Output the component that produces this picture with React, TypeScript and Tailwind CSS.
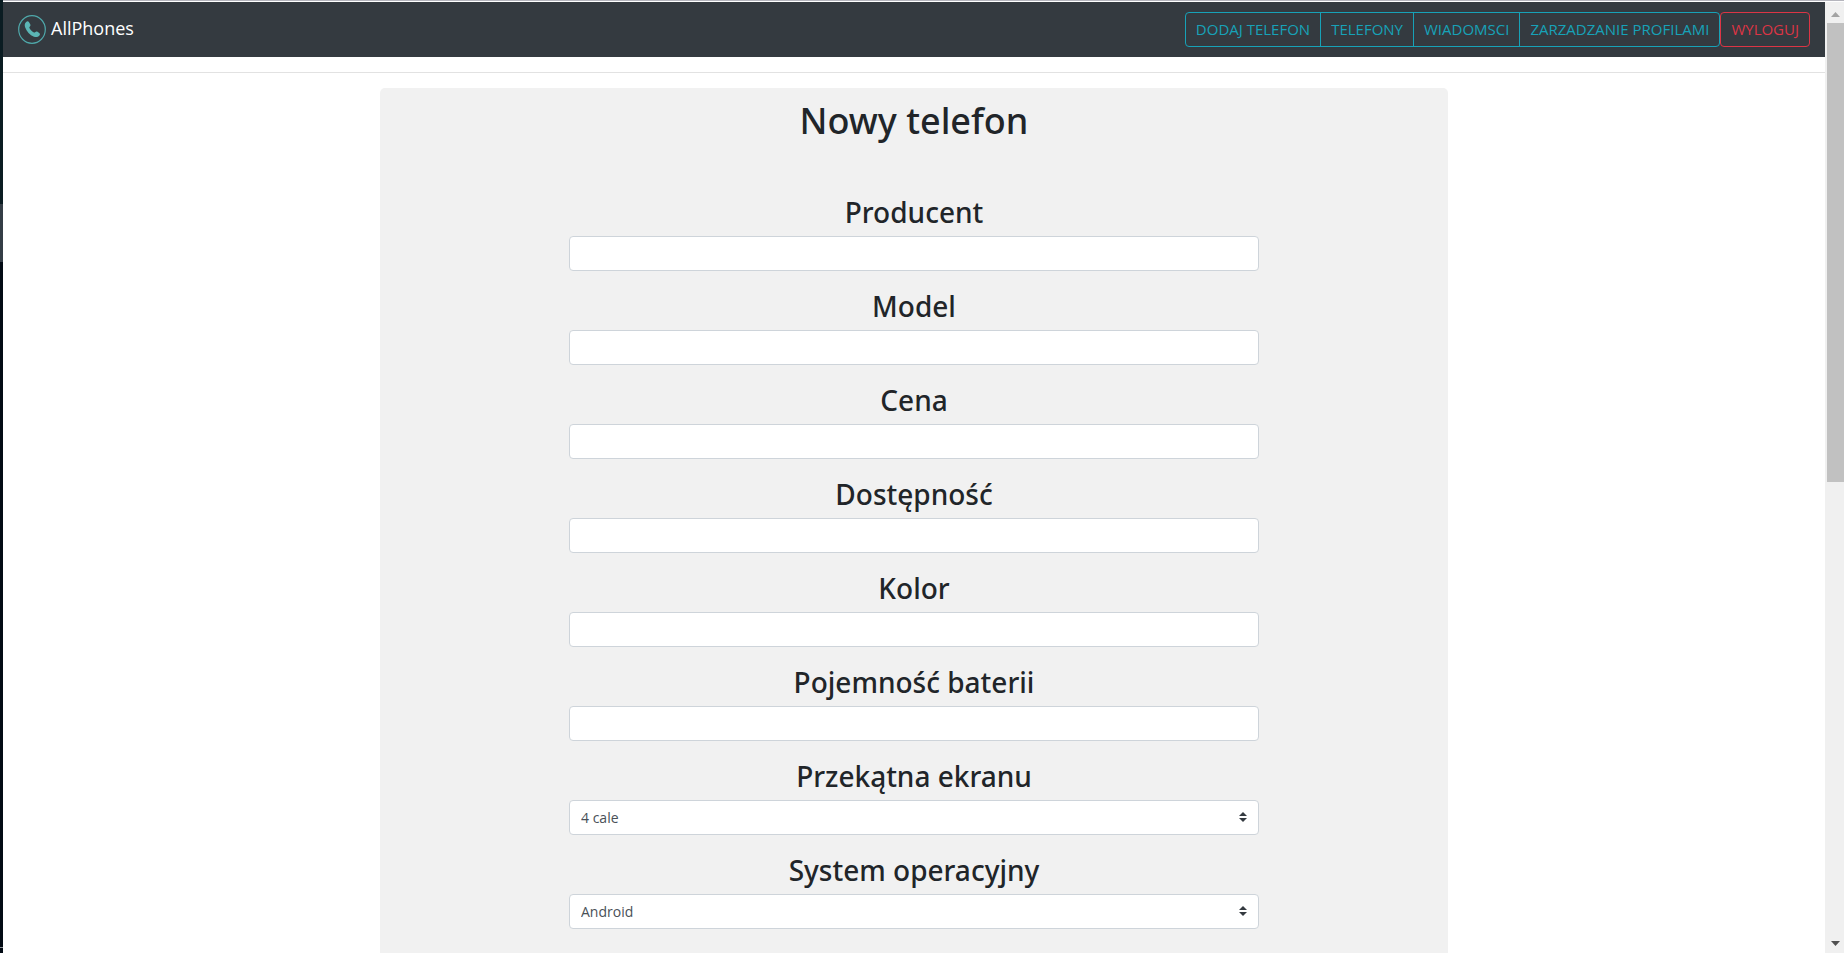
import React from "react";

const navLinks = ["DODAJ TELEFON", "TELEFONY", "WIADOMSCI", "ZARZADZANIE PROFILAMI"];

type Field = { id: string; label: string; options?: string[] };

const fields: Field[] = [
  { id: "producent", label: "Producent" },
  { id: "model", label: "Model" },
  { id: "cena", label: "Cena" },
  { id: "dostepnosc", label: "Dostępność" },
  { id: "kolor", label: "Kolor" },
  { id: "bateria", label: "Pojemność baterii" },
  { id: "ekran", label: "Przekątna ekranu", options: ["4 cale"] },
  { id: "system", label: "System operacyjny", options: ["Android"] },
];

function PhoneLogo() {
  return (
    <svg viewBox="0 0 28 29" className="h-[29px] w-7 shrink-0" fill="none" aria-hidden="true">
      <ellipse cx="14" cy="14.5" rx="13.3" ry="13.8" stroke="#4fa9ab" strokeWidth="1.2" />
      <path
        d="M8.2 6.9c1-.9 2.100-.7 2.700.2l1.300 2.200c.5.900.3 1.500-.3 2.100-.7.600-.7 1.200-.3 1.900.9 1.700 2.200 3.100 3.900 4 .7.400 1.300.3 1.900-.3.600-.7 1.300-.8 2.100-.3l1.700 1.200c.9.700 1 1.700.2 2.600-1.400 1.600-3.300 2-5.400 1.200-4.200-1.700-7.400-5.100-8.900-9.500-.7-2.100-.4-4 1.100-5.300z"
        fill="#5bb5b5"
      />
    </svg>
  );
}

function Navbar() {
  return (
    <header className="flex h-[55px] shrink-0 items-center justify-between bg-[#343a40] px-[15px]">
      <a href="#" className="flex items-center gap-[5px] text-white">
        <PhoneLogo />
        <span className="pb-1 text-[18px] leading-6">AllPhones</span>
      </a>
      <nav className="flex text-[15px] leading-[21px]">
        <div className="flex divide-x divide-[#17a2b8] overflow-hidden rounded-[4px] border border-[#17a2b8] text-[#17a2b8]">
          {navLinks.map((name) => (
            <a key={name} href="#" className="flex h-[33px] items-center px-[10px]">
              {name}
            </a>
          ))}
        </div>
        <button type="button" className="h-[35px] rounded-[4px] border border-[#dc3545] px-[10px] text-[#dc3545]">
          WYLOGUJ
        </button>
      </nav>
    </header>
  );
}

function FormField({ id, label, options }: Field) {
  return (
    <div className="flex flex-col">
      <label
        htmlFor={id}
        className="mb-[6px] text-center font-['Noto_Sans',sans-serif] text-[28px] font-medium leading-9"
      >
        {label}
      </label>
      {options ? (
        <div className="relative">
          <select
            id={id}
            className="block h-[35px] w-full appearance-none rounded-[4px] border border-[#ced4da] bg-white px-[11px] text-[14px] text-[#495057]"
          >
            {options.map((option) => (
              <option key={option}>{option}</option>
            ))}
          </select>
          <svg
            viewBox="0 0 4 5"
            className="pointer-events-none absolute right-3 top-3 h-[10px] w-2"
            fill="#343a40"
            aria-hidden="true"
          >
            <path d="M2 0L0 2h4zm0 5L0 3h4z" />
          </svg>
        </div>
      ) : (
        <input
          id={id}
          type="text"
          className="h-[35px] w-full rounded-[4px] border border-[#ced4da] bg-white px-[11px] text-[14px] text-[#495057]"
        />
      )}
    </div>
  );
}

function Scrollbar() {
  return (
    <div className="flex w-[19px] shrink-0 flex-col items-end bg-[#f0f0f0]" aria-hidden="true">
      <div className="flex h-[21px] w-[17px] shrink-0 items-center justify-center">
        <svg viewBox="0 0 9 5" className="mt-1 h-[5px] w-[9px]" fill="#a3a3a3">
          <path d="M4.500 0L9 5H0z" />
        </svg>
      </div>
      <div className="h-[48.3%] w-[17px] bg-[#c1c1c1]" />
      <div className="mt-auto flex h-[20px] w-[17px] shrink-0 items-center justify-center">
        <svg viewBox="0 0 9 5" className="h-[5px] w-[9px]" fill="#505050">
          <path d="M4.500 5L9 0H0z" />
        </svg>
      </div>
    </div>
  );
}

export default function App() {
  return (
    <div className="h-screen overflow-hidden bg-white pb-[3px] font-['Open_Sans','Noto_Sans',sans-serif] text-[#212529]">
      <div className="flex h-full">
        <div className="flex w-[3px] shrink-0 flex-col bg-[#020a14]" aria-hidden="true">
          <div className="h-[204px] bg-[#0a1c22]" />
          <div className="h-[58px] bg-[#343d46]" />
          <div className="mt-auto mb-[5px] h-px bg-[#8a8f95]" />
        </div>
        <div className="flex min-w-0 flex-1 flex-col">
          <div className="h-[2px] shrink-0 border-b border-white bg-[#b5b5bd]" />
          <div className="flex min-h-0 flex-1">
            <div className="flex min-w-0 flex-1 flex-col">
              <Navbar />
              <hr className="mt-[15px] shrink-0 border-t border-[#e2e2e2]" />
              <main className="mx-auto mt-[15px] min-h-0 w-full max-w-[1068px] flex-1 overflow-hidden rounded-t-[5px] bg-[#f1f1f1]">
                <h1 className="mt-[10px] text-center font-['Noto_Sans',sans-serif] text-[36px] font-medium leading-[45px]">
                  Nowy telefon
                </h1>
                <form className="mx-auto mt-[51px] flex w-full max-w-[690px] flex-col gap-[17px]">
                  {fields.map((field) => (
                    <FormField key={field.id} {...field} />
                  ))}
                </form>
              </main>
            </div>
            <Scrollbar />
          </div>
        </div>
      </div>
    </div>
  );
}
